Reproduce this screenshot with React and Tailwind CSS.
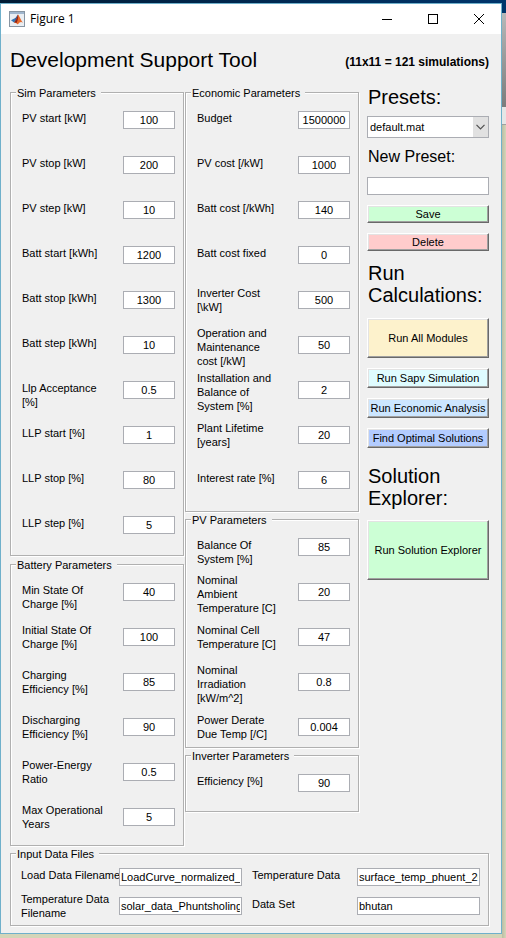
import React from "react";

const simParameters = [
  { label: "PV start [kW]", value: "100" },
  { label: "PV stop [kW]", value: "200" },
  { label: "PV step [kW]", value: "10" },
  { label: "Batt start [kWh]", value: "1200" },
  { label: "Batt stop [kWh]", value: "1300" },
  { label: "Batt step [kWh]", value: "10" },
  { label: "Llp Acceptance\n[%]", value: "0.5", align: "top" },
  { label: "LLP start [%]", value: "1" },
  { label: "LLP stop [%]", value: "80" },
  { label: "LLP step [%]", value: "5" },
];

const batteryParameters = [
  { label: "Min State Of\nCharge [%]", value: "40", align: "top" },
  { label: "Initial State Of\nCharge [%]", value: "100", align: "middle" },
  { label: "Charging\nEfficiency [%]", value: "85", align: "middle" },
  { label: "Discharging\nEfficiency [%]", value: "90", align: "middle" },
  { label: "Power-Energy\nRatio", value: "0.5", align: "middle" },
  { label: "Max Operational\nYears", value: "5", align: "middle" },
];

const economicParameters = [
  { label: "Budget", value: "1500000" },
  { label: "PV cost [/kW]", value: "1000" },
  { label: "Batt cost [/kWh]", value: "140" },
  { label: "Batt cost fixed", value: "0" },
  { label: "Inverter Cost\n[\\kW]", value: "500", align: "middle" },
  { label: "Operation and\nMaintenance\ncost [/kW]", value: "50", align: "full" },
  { label: "Installation and\nBalance of\nSystem [%]", value: "2", align: "full" },
  { label: "Plant Lifetime\n[years]", value: "20", align: "middle" },
  { label: "Interest rate [%]", value: "6" },
];

const pvParameters = [
  { label: "Balance Of\nSystem [%]", value: "85", align: "top" },
  { label: "Nominal\nAmbient\nTemperature [C]", value: "20", align: "full" },
  { label: "Nominal Cell\nTemperature [C]", value: "47", align: "middle" },
  { label: "Nominal\nIrradiation\n[kW/m^2]", value: "0.8", align: "full" },
  { label: "Power Derate\nDue Temp [/C]", value: "0.004", align: "middle" },
];

const inverterParameters = [{ label: "Efficiency [%]", value: "90" }];

const labelPadding = {
  top: "pt-[11px]",
  middle: "pt-[6px]",
  full: "pt-[1px]",
};

const fieldClass =
  "h-[18px] rounded-none border border-[#abadb3] bg-white text-[11px] leading-[14px] text-black outline-none";

function Panel({ title, className = "", children }) {
  return (
    <fieldset
      className={`min-w-0 border border-[#b0b0b0] pt-[2px] shadow-[1px_1px_0_#fff,inset_1px_1px_0_#fff] ${className}`}
    >
      <legend className="ml-[5px] h-3 bg-[#f0f0f0] pl-px pr-[5px] leading-[14px]">{title}</legend>
      {children}
    </fieldset>
  );
}

function ParameterPanel({ title, rows, className }) {
  const prefix = title.toLowerCase().replace(/\s/g, "-");
  return (
    <Panel title={title} className={className}>
      <div className="flex flex-col gap-[5px] pl-[11px] pr-2">
        {rows.map((row, i) => (
          <div key={row.label} className="flex h-10 items-start justify-between">
            <label
              htmlFor={`${prefix}-${i}`}
              className={`whitespace-pre leading-[14px] ${labelPadding[row.align || "top"]}`}
            >
              {row.label}
            </label>
            <input
              id={`${prefix}-${i}`}
              defaultValue={row.value}
              className={`${fieldClass} mt-[11px] w-[52px] shrink-0 text-center`}
            />
          </div>
        ))}
      </div>
    </Panel>
  );
}

function PushButton({ className, children }) {
  return (
    <button
      type="button"
      className={`w-full whitespace-nowrap border border-b-[#696969] border-l-white border-r-[#696969] border-t-white text-center text-[11px] leading-[14px] shadow-[inset_-1px_-1px_0_#a0a0a0,inset_1px_1px_0_#e3e3e3] ${className}`}
    >
      {children}
    </button>
  );
}

function MatlabIcon() {
  return (
    <svg width="16" height="16" viewBox="0 0 16 16" aria-hidden="true">
      <rect x="0.5" y="0.5" width="15" height="15" fill="#e9eef3" stroke="#8795a3" />
      <rect x="1" y="1" width="14" height="2" fill="#9fb6ce" />
      <path d="M2 9.2 5.3 7.6 7.2 9.7 5 11.4Z" fill="#2f75b5" />
      <path d="M5.3 7.6C7 7 7.8 4.2 9 3.4L7.8 9 6.6 10.2Z" fill="#3a5f9c" />
      <path d="M9 3.4C10.3 4.6 12 9.5 14 11.7 12 10.6 10.8 10.8 9 13.3 8.2 13.4 7.6 11.6 5 11.4 7.4 9.8 8.3 5.4 9 3.4Z" fill="#e8682a" />
      <path d="M9 3.4C9.4 6 9 9 7.6 12 7 11.5 6.2 11.4 5 11.4 7.4 9.8 8.3 5.4 9 3.4Z" fill="#8c2217" />
    </svg>
  );
}

function TitleBar() {
  return (
    <header className="flex h-[30px] items-center bg-white pl-2 pr-[14px]">
      <MatlabIcon />
      <span className="ml-[5px] flex-1 font-['Open_Sans',sans-serif] text-[12px] leading-4 text-black">
        Figure 1
      </span>
      <div className="flex items-center gap-[30px]">
        <button type="button" aria-label="Minimize" className="h-4 w-4">
          <svg width="16" height="16" viewBox="0 0 16 16">
            <path d="M3 8.5h10" stroke="#000" />
          </svg>
        </button>
        <button type="button" aria-label="Maximize" className="h-4 w-4">
          <svg width="16" height="16" viewBox="0 0 16 16">
            <rect x="3.5" y="3.5" width="9" height="9" fill="none" stroke="#000" />
          </svg>
        </button>
        <button type="button" aria-label="Close" className="h-4 w-4">
          <svg width="16" height="16" viewBox="0 0 16 16">
            <path d="M3 3l10 10M13 3L3 13" stroke="#000" />
          </svg>
        </button>
      </div>
    </header>
  );
}

function Sidebar() {
  return (
    <aside className="w-[122px] shrink-0">
      <h2 className="pl-px text-[20px] leading-[22px]">
        <label htmlFor="preset">Presets:</label>
      </h2>
      <div className="relative mt-2">
        <select
          id="preset"
          className="h-[22px] w-full appearance-none rounded-none border border-[#abadb3] bg-white pl-[2px] text-[11px] leading-[14px] outline-none"
        >
          <option>default.mat</option>
        </select>
        <span className="pointer-events-none absolute bottom-px right-px top-px flex w-[15px] items-center justify-center bg-[#e1e1e1]">
          <svg width="9" height="6" viewBox="0 0 9 6" fill="none">
            <path d="M0.5 0.8 4.5 4.8 8.5 0.8" stroke="#505050" strokeWidth="1.2" />
          </svg>
        </span>
      </div>
      <label htmlFor="new-preset" className="mt-2 block pl-px text-[16px] leading-[22px]">
        New Preset:
      </label>
      <input id="new-preset" className={`${fieldClass} mt-[9px] block w-full px-[2px]`} />
      <PushButton className="mt-[10px] h-[18px] bg-[#ccffd5]">Save</PushButton>
      <PushButton className="mt-[10px] h-[18px] bg-[#ffcccc]">Delete</PushButton>
      <h2 className="mt-[11px] pl-px text-[20px] leading-[22px]">Run Calculations:</h2>
      <PushButton className="mt-[12px] h-10 bg-[#fdf2cc]">Run All Modules</PushButton>
      <PushButton className="mt-[10px] h-5 bg-[#dffcff]">Run Sapv Simulation</PushButton>
      <PushButton className="mt-[10px] h-5 bg-[#cce6ff]">Run Economic Analysis</PushButton>
      <PushButton className="mt-[10px] h-5 bg-[#b3ccff]">Find Optimal Solutions</PushButton>
      <h2 className="mt-[17px] pl-px text-[20px] leading-[22px]">
        Solution
        <br />
        Explorer:
      </h2>
      <PushButton className="mt-[11px] h-[60px] bg-[#ccffd5]">Run Solution Explorer</PushButton>
    </aside>
  );
}

function InputDataFiles() {
  const dataField = `${fieldClass} mt-[5px] w-full min-w-0 px-px`;
  return (
    <Panel title="Input Data Files" className="mt-px pb-[5px]">
      <div className="mt-[2px] grid auto-rows-[28px] grid-cols-[98px_1fr_115px_1fr] items-start gap-y-px pl-[10px] pr-2 leading-[14px]">
        <label htmlFor="load-file" className="whitespace-nowrap pt-[5px]">Load Data Filename</label>
        <input id="load-file" defaultValue="LoadCurve_normalized_scaled.mat" className={dataField} />
        <label htmlFor="temp-data" className="pl-[10px] pt-[5px]">Temperature Data</label>
        <input id="temp-data" defaultValue="surface_temp_phuent_2004.mat" className={dataField} />
        <label htmlFor="temp-file">
          Temperature Data
          <br />
          Filename
        </label>
        <input id="temp-file" defaultValue="solar_data_Phuntsholing_baseline.mat" className={dataField} />
        <label htmlFor="data-set" className="pl-[10px] pt-[5px]">Data Set</label>
        <input id="data-set" defaultValue="bhutan" className={dataField} />
      </div>
    </Panel>
  );
}

export default function App() {
  return (
    <div className="flex min-h-screen bg-[#d4d5b8] font-['Liberation_Sans',Arial,sans-serif] text-[11px] text-black">
      <div className="flex min-w-0 flex-1 flex-col">
        <div className="h-[3px] bg-linear-to-r from-[#001b35] to-[#00356b]" />
        <main className="border border-[#6fb0cb] bg-[#f0f0f0] pb-[7px]">
          <TitleBar />
          <div className="pl-[9px] pr-3">
            <div className="flex h-[52px] items-center justify-between">
              <h1 className="whitespace-nowrap text-[21px] leading-6">Development Support Tool</h1>
              <p className="whitespace-nowrap pt-1 text-[12px] font-bold leading-4">
                (11x11 = 121 simulations)
              </p>
            </div>
            <div className="flex items-start gap-2">
              <div className="grid min-w-0 flex-1 grid-cols-2 items-start gap-px">
                <div className="flex flex-col gap-[2px]">
                  <ParameterPanel title="Sim Parameters" rows={simParameters} className="pb-[10px]" />
                  <ParameterPanel title="Battery Parameters" rows={batteryParameters} className="pb-2" />
                </div>
                <div className="flex flex-col gap-px">
                  <ParameterPanel title="Economic Parameters" rows={economicParameters} className="pb-[11px]" />
                  <ParameterPanel title="PV Parameters" rows={pvParameters} />
                  <ParameterPanel title="Inverter Parameters" rows={inverterParameters} className="pb-2" />
                </div>
              </div>
              <Sidebar />
            </div>
            <InputDataFiles />
          </div>
        </main>
      </div>
      <div className="flex w-1 shrink-0 flex-col">
        <div className="h-[13px] bg-[#00356b]" />
        <div className="h-[94px] bg-linear-to-b from-[#b8b8b8] to-[#7c7c7c]" />
        <div className="h-[18px] border-b border-[#a0a0a0] bg-[#e6e6e6]" />
        <div className="flex-1 bg-linear-to-r from-[#bcbda3] to-[#d4d5b8]" />
      </div>
    </div>
  );
}
